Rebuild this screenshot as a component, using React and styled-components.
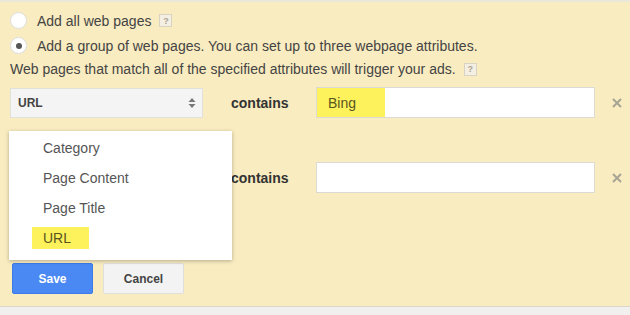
import styled, { createGlobalStyle } from "styled-components";

const GlobalStyle = createGlobalStyle`
  html, body {
    margin: 0;
    padding: 0;
    background: #f1f0ef;
  }
  body {
    font-family: "Liberation Sans", Arial, sans-serif;
    color: #444;
  }
`;

const Panel = styled.div`
  height: 307px;
  box-sizing: border-box;
  background: #f9ecc0;
  border-top: 2px solid #ebe7da;
  border-bottom: 1px solid #d9d6cc;
  padding: 6px 0 0 10px;
`;

const RadioRow = styled.div`
  display: flex;
  align-items: center;
  height: 25px;
  font-size: 14px;
  color: #444;
`;

const Radio = styled.span`
  width: 15px;
  height: 15px;
  border-radius: 50%;
  background: #fff;
  border: 1px solid #ddd;
  margin-right: 10px;
  display: flex;
  align-items: center;
  justify-content: center;
  &::after {
    content: "";
    display: ${(p) => (p.checked ? "block" : "none")};
    width: 6px;
    height: 6px;
    border-radius: 50%;
    background: #555;
  }
`;

const Help = styled.span`
  display: inline-flex;
  align-items: center;
  justify-content: center;
  width: 11px;
  height: 11px;
  margin-left: ${(p) => p.gap || 8}px;
  border: 1px solid #d8d3c3;
  background: #f4efe2;
  color: #a9a394;
  font-size: 9px;
  font-weight: bold;
`;

const Hint = styled.div`
  display: flex;
  align-items: center;
  height: 22px;
  font-size: 14px;
  color: #444;
`;

const RuleRow = styled.div`
  display: flex;
  align-items: center;
  height: 31px;
  margin-top: ${(p) => p.top}px;
`;

const SelectWrap = styled.div`
  position: relative;
  width: 193px;
  height: 30px;
`;

const Select = styled.div`
  box-sizing: border-box;
  height: 100%;
  display: flex;
  align-items: center;
  justify-content: space-between;
  padding: 0 6px 0 7px;
  background: #f4f4f4;
  border: 1px solid #e2e0da;
  font-size: 12px;
  font-weight: bold;
  color: #444;
`;

const Label = styled.div`
  width: 85px;
  padding-left: 28px;
  box-sizing: content-box;
  font-size: 14px;
  font-weight: bold;
  color: #333;
`;

const TextField = styled.div`
  box-sizing: border-box;
  width: 279px;
  height: 31px;
  display: flex;
  background: #fff;
  border: 1px solid #dcdad3;
  font-size: 14px;
  color: #555;
`;

const Highlight = styled.span`
  display: flex;
  align-items: center;
  width: ${(p) => p.w}px;
  padding-left: 11px;
  box-sizing: border-box;
  background: #fdf25c;
  color: #5a5520;
`;

const Remove = styled.button`
  border: none;
  background: none;
  padding: 0;
  margin-left: 16px;
  width: 12px;
  height: 12px;
  display: flex;
  cursor: pointer;
`;

const Menu = styled.ul`
  position: absolute;
  left: -1px;
  top: 43px;
  z-index: 2;
  width: 223px;
  height: 129px;
  margin: 0;
  padding: 2px 0 0;
  box-sizing: border-box;
  list-style: none;
  background: #fff;
  box-shadow: 0 1px 4px rgba(0, 0, 0, 0.28);
`;

const MenuItem = styled.li`
  height: 30px;
  display: flex;
  align-items: center;
  padding-left: ${(p) => (p.active ? 23 : 34)}px;
  font-size: 14px;
  color: #555;
  & > span {
    display: flex;
    align-items: center;
    height: 22px;
    padding: 0 ${(p) => (p.active ? "18px 0 11px" : "0")};
    background: ${(p) => (p.active ? "#fdf25c" : "transparent")};
    color: ${(p) => (p.active ? "#5a5520" : "#555")};
  }
`;

const Actions = styled.div`
  display: flex;
  gap: 10px;
  margin-top: 70px;
  padding-left: 2px;
`;

const Button = styled.button`
  width: 81px;
  height: 31px;
  border-radius: 2px;
  font-family: "Liberation Sans", Arial, sans-serif;
  font-size: 12px;
  font-weight: bold;
  cursor: pointer;
  border: 1px solid ${(p) => (p.primary ? "#3d7be6" : "#e1dfdb")};
  background: ${(p) => (p.primary ? "#4a89f3" : "#f3f3f3")};
  color: ${(p) => (p.primary ? "#fff" : "#444")};
`;

const Cross = () => (
  <svg width="12" height="12" viewBox="0 0 12 12">
    <path d="M2 2 L10 10 M10 2 L2 10" stroke="#a8a494" strokeWidth="2" />
  </svg>
);

const Arrows = () => (
  <svg width="8" height="12" viewBox="0 0 8 12">
    <path d="M0.5 5 L4 1 L7.5 5 Z M0.5 7 L4 11 L7.5 7 Z" fill="#777" />
  </svg>
);

const options = ["Category", "Page Content", "Page Title", "URL"];

const App = () => {
  return (
    <>
      <GlobalStyle />
      <Panel>
        <RadioRow>
          <Radio />
          Add all web pages
          <Help>?</Help>
        </RadioRow>
        <RadioRow>
          <Radio checked />
          Add a group of web pages. You can set up to three webpage attributes.
        </RadioRow>
        <Hint>
          Web pages that match all of the specified attributes will trigger your ads.
          <Help gap={8}>?</Help>
        </Hint>

        <RuleRow top={7}>
          <SelectWrap>
            <Select>
              URL
              <Arrows />
            </Select>
            <Menu>
              {options.map((o) => (
                <MenuItem key={o} active={o === "URL"}>
                  <span>{o}</span>
                </MenuItem>
              ))}
            </Menu>
          </SelectWrap>
          <Label>contains</Label>
          <TextField>
            <Highlight w={68}>Bing</Highlight>
          </TextField>
          <Remove>
            <Cross />
          </Remove>
        </RuleRow>

        <RuleRow top={44}>
          <SelectWrap>
            <Select>
              URL
              <Arrows />
            </Select>
          </SelectWrap>
          <Label>contains</Label>
          <TextField />
          <Remove>
            <Cross />
          </Remove>
        </RuleRow>

        <Actions>
          <Button primary>Save</Button>
          <Button>Cancel</Button>
        </Actions>
      </Panel>
    </>
  );
};

export default App;
